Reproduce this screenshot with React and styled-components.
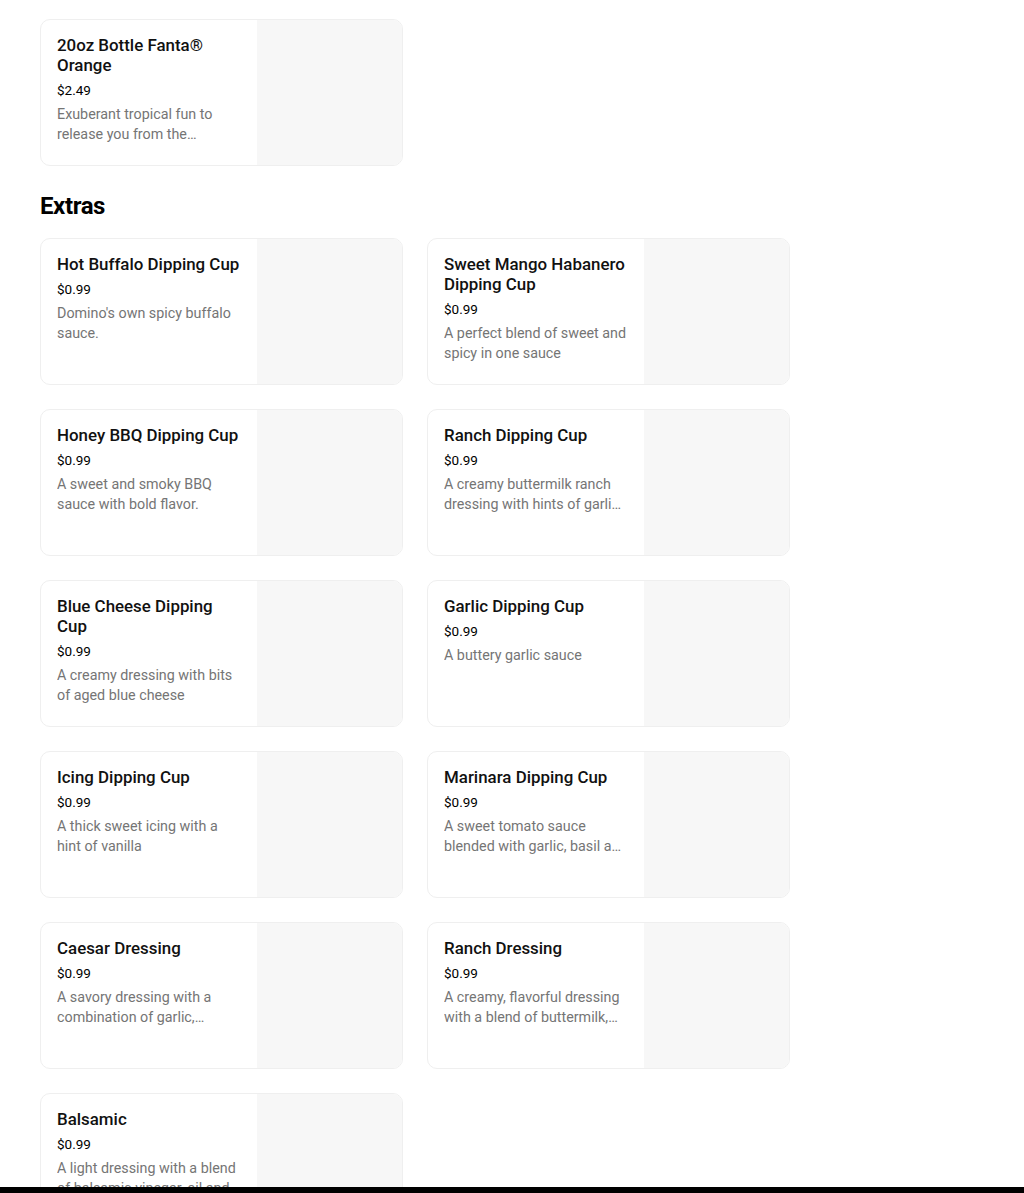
import React from 'react'
import styled, { createGlobalStyle } from 'styled-components'

const GlobalStyle = createGlobalStyle`
    body {
        margin: 0;
        background: #fff;
        font-family: Roboto, "Noto Sans", sans-serif;
        color: #000;
    }
`

const Page = styled.div`
    padding: 19px 40px 0 40px;
    height: 1193px;
    overflow: hidden;
    box-sizing: border-box;
`

const Grid = styled.div`
    display: grid;
    grid-template-columns: 363px 363px;
    column-gap: 24px;
    row-gap: 24px;
`

const Heading = styled.h2`
    margin: 24px 0 16px 0;
    font-size: 24px;
    line-height: 32px;
    font-weight: 700;
    letter-spacing: -0.4px;
`

const Card = styled.div`
    display: flex;
    height: 147px;
    box-sizing: border-box;
    border: 1px solid #efefef;
    border-radius: 10px;
    overflow: hidden;
    background: #fff;
`

const Info = styled.div`
    flex: 1;
    min-width: 0;
    padding: 15px 16px 0 16px;
`

const Title = styled.div`
    font-size: 16.9px;
    line-height: 20px;
    font-weight: 500;
    color: #111;
`

const Price = styled.div`
    margin-top: 5px;
    font-size: 13.5px;
    line-height: 20px;
`

const Desc = styled.div`
    margin-top: 4px;
    font-size: 14.3px;
    line-height: 20px;
    color: #757575;
    display: -webkit-box;
    -webkit-line-clamp: 2;
    -webkit-box-orient: vertical;
    overflow: hidden;
`

const Thumb = styled.div`
    width: 145px;
    flex-shrink: 0;
    background: #f7f7f7;
`

const BottomBar = styled.div`
    position: fixed;
    left: 0;
    right: 0;
    bottom: 0;
    height: 6px;
    background: #000;
`

const drinks = [
    { name: '20oz Bottle Fanta® Orange', price: '$2.49', desc: 'Exuberant tropical fun to release you from the everyday.' },
]

const extras = [
    { name: 'Hot Buffalo Dipping Cup', price: '$0.99', desc: "Domino's own spicy buffalo sauce." },
    { name: 'Sweet Mango Habanero Dipping Cup', price: '$0.99', desc: 'A perfect blend of sweet and spicy in one sauce' },
    { name: 'Honey BBQ Dipping Cup', price: '$0.99', desc: 'A sweet and smoky BBQ sauce with bold flavor.' },
    { name: 'Ranch Dipping Cup', price: '$0.99', desc: 'A creamy buttermilk ranch dressing with hints of garlic and onion.' },
    { name: 'Blue Cheese Dipping Cup', price: '$0.99', desc: 'A creamy dressing with bits of aged blue cheese' },
    { name: 'Garlic Dipping Cup', price: '$0.99', desc: 'A buttery garlic sauce' },
    { name: 'Icing Dipping Cup', price: '$0.99', desc: 'A thick sweet icing with a hint of vanilla' },
    { name: 'Marinara Dipping Cup', price: '$0.99', desc: 'A sweet tomato sauce blended with garlic, basil and oregano.' },
    { name: 'Caesar Dressing', price: '$0.99', desc: 'A savory dressing with a combination of garlic, parmesan and lemon.' },
    { name: 'Ranch Dressing', price: '$0.99', desc: 'A creamy, flavorful dressing with a blend of buttermilk, garlic and herbs.' },
    { name: 'Balsamic', price: '$0.99', desc: 'A light dressing with a blend of balsamic vinegar, oil and herbs.' },
]

const ItemCard = ({ item }) => (
    <Card>
        <Info>
            <Title>{item.name}</Title>
            <Price>{item.price}</Price>
            <Desc>{item.desc}</Desc>
        </Info>
        <Thumb />
    </Card>
)

const App = () => {
    return <>
        <GlobalStyle />
        <Page>
            <Grid>
                {drinks.map(item => <ItemCard key={item.name} item={item} />)}
            </Grid>
            <Heading>Extras</Heading>
            <Grid>
                {extras.map(item => <ItemCard key={item.name} item={item} />)}
            </Grid>
        </Page>
        <BottomBar />
    </>
}

export default App
